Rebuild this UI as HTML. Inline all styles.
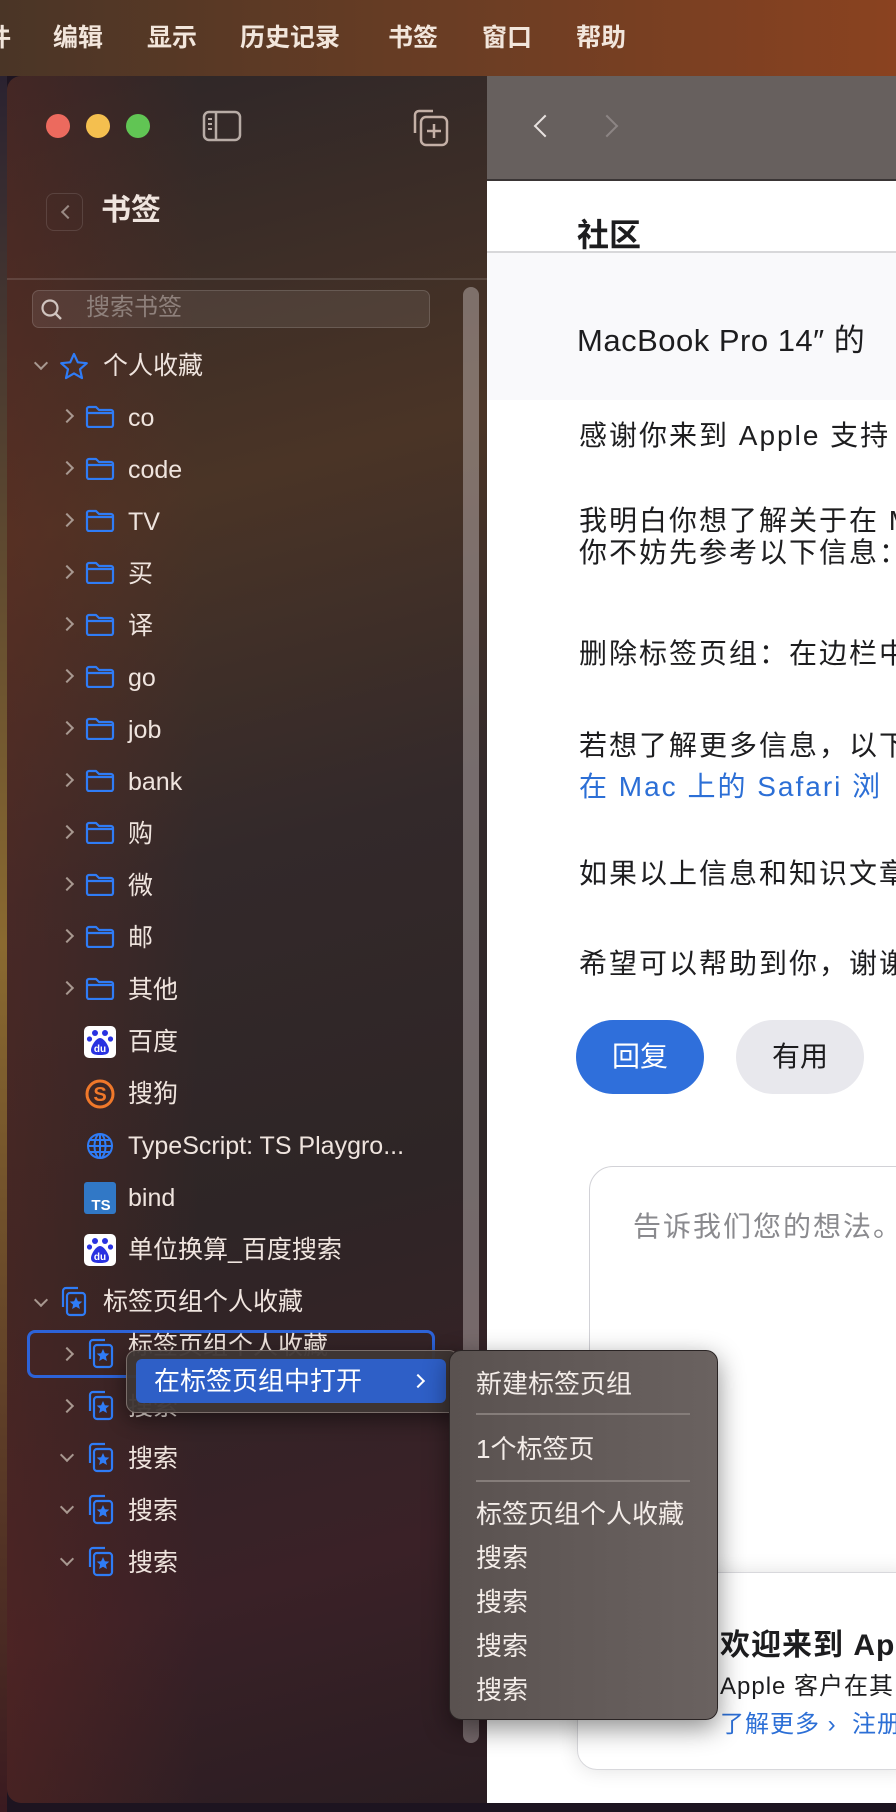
<!DOCTYPE html>
<html><head><meta charset="utf-8">
<style>
*{margin:0;padding:0;box-sizing:border-box}
body{width:896px;height:1812px;overflow:hidden;position:relative;font-family:"Liberation Sans","Noto Sans CJK SC",sans-serif;background:#1d1420}
.a{position:absolute}
.menubar{left:0;top:0;width:896px;height:76px;background:linear-gradient(90deg,#4a3526 0%,#6a3d24 50%,#8a4220 100%)}
.menubar span{position:absolute;top:18px;font-size:25px;color:#f2e6dc;font-weight:bold}
.side{left:7px;top:76px;width:480px;height:1727px;border-radius:14px 0 0 14px;background:linear-gradient(165deg,#2d2628 0%,#4a3426 25%,#33292a 45%,#2e2526 65%,#3a2127 85%,#2a1d22 100%);overflow:hidden}
.side:before{content:"";position:absolute;left:0;top:0;width:100%;height:100%;background:linear-gradient(90deg,rgba(110,40,30,.35),rgba(0,0,0,0) 40%)}
.t{position:absolute;color:#efe4de;font-size:25px;white-space:nowrap;line-height:30px}
.chev{position:absolute;width:10px;height:10px;border-right:2.5px solid #a89890;border-bottom:2.5px solid #a89890}
.cr{transform:rotate(-45deg)}
.cd{transform:rotate(45deg)}
.right{left:487px;top:76px;width:409px;height:1727px;background:#fff;overflow:hidden}
.body{position:absolute;left:92px;font-size:28px;color:#1d1d1f;letter-spacing:2px;white-space:nowrap;line-height:34px}
.mi{position:absolute;left:476px;color:#f3ece8;font-size:26px;white-space:nowrap;line-height:30px}
</style></head><body>
<div class="a menubar">
<span style="left:-14px">件</span><span style="left:53px">编辑</span><span style="left:147px">显示</span><span style="left:240px">历史记录</span><span style="left:388px">书签</span><span style="left:482px">窗口</span><span style="left:576px">帮助</span>
</div>
<div class="a" style="left:0;top:76px;width:7px;height:1736px;background:linear-gradient(#2a2230,#8a6a30 50%,#3a1a20)"></div>

<div class="a side">
 <div class="a" style="left:39px;top:38px;width:24px;height:24px;border-radius:50%;background:#ec6a5e"></div>
 <div class="a" style="left:79px;top:38px;width:24px;height:24px;border-radius:50%;background:#f4bf4f"></div>
 <div class="a" style="left:119px;top:38px;width:24px;height:24px;border-radius:50%;background:#61c554"></div>
 <svg class="a" style="left:195px;top:34px" width="40" height="32"><rect x="2" y="2" width="36" height="28" rx="5" fill="none" stroke="#b8aca6" stroke-width="2.5"/><line x1="14" y1="2" x2="14" y2="30" stroke="#b8aca6" stroke-width="2.5"/><line x1="6" y1="9" x2="10" y2="9" stroke="#b8aca6" stroke-width="2"/><line x1="6" y1="14" x2="10" y2="14" stroke="#b8aca6" stroke-width="2"/><line x1="6" y1="19" x2="10" y2="19" stroke="#b8aca6" stroke-width="2"/></svg>
 <svg class="a" style="left:404px;top:31px" width="40" height="40"><path d="M22 4H8a4 4 0 0 0-4 4v18" fill="none" stroke="#c4b0a6" stroke-width="2.5"/><rect x="10" y="10" width="26" height="28" rx="5" fill="none" stroke="#c4b0a6" stroke-width="2.5"/><path d="M23 17v14M16 24h14" stroke="#c4b0a6" stroke-width="2.5"/></svg>
 <div class="a" style="left:39px;top:117px;width:37px;height:38px;border:1.5px solid rgba(255,255,255,.12);border-radius:8px"></div>
 <div class="chev a" style="left:56px;top:131px;transform:rotate(135deg);width:10px;height:10px;border-color:#9a8a84;border-width:0 2px 2px 0"></div>
 <div class="t" style="left:94px;top:116px;font-size:30px;font-weight:bold;line-height:38px">书签</div>
 <div class="a" style="left:0;top:202px;width:480px;height:2px;background:rgba(255,255,255,.12)"></div>
 <div class="a" style="left:25px;top:214px;width:398px;height:38px;border-radius:7px;background:rgba(255,255,255,.08);border:1.5px solid rgba(255,255,255,.14)"></div>
 <svg class="a" style="left:33px;top:222px" width="24" height="24"><circle cx="10" cy="10" r="7.5" fill="none" stroke="#d0c4bf" stroke-width="2.2"/><path d="M15.5 15.5L21 21" stroke="#d0c4bf" stroke-width="2.4"/></svg>
 <div class="t" style="left:79px;top:217px;color:#8e807b;font-size:24px">搜索书签</div>
 <div class="a" style="left:456px;top:211px;width:16px;height:1456px;border-radius:8px;background:rgba(200,190,190,.45)"></div>
</div>

<div class="chev cd a" style="left:36px;top:358px"></div>
<svg class="a" style="left:59px;top:352px" width="30" height="30"><path d="M15 2l3.8 8.3 9 .9-6.8 6 2 8.9L15 21.4 7 26.1l2-8.9-6.8-6 9-.9z" fill="none" stroke="#2f7cf6" stroke-width="2.2" stroke-linejoin="round"/></svg>
<div class="t" style="left:103px;top:351px">个人收藏</div>

<svg width="0" height="0" style="position:absolute"><defs>
<symbol id="fold" viewBox="0 0 30 24"><path d="M2 5a2 2 0 0 1 2-2h7l3 3h12a2 2 0 0 1 2 2v13a2 2 0 0 1-2 2H4a2 2 0 0 1-2-2z M2 9h26" fill="none" stroke="#2f7cf6" stroke-width="2.2" stroke-linejoin="round"/></symbol>
<symbol id="tg" viewBox="0 0 30 32"><path d="M5 22V6a3 3 0 0 1 3-3h12" fill="none" stroke="#2f7cf6" stroke-width="2.2"/><rect x="9" y="8" width="18" height="22" rx="3" fill="none" stroke="#2f7cf6" stroke-width="2.2"/><path d="M18 12l1.9 4.2 4.4.4-3.4 3 1 4.4-3.9-2.3-3.9 2.3 1-4.4-3.4-3 4.4-.4z" fill="#2f7cf6"/></symbol>
<symbol id="bd" viewBox="0 0 32 32"><rect width="32" height="32" rx="5" fill="#fff"/><circle cx="11" cy="7" r="3" fill="#2932e1"/><circle cx="21" cy="7" r="3" fill="#2932e1"/><circle cx="5.5" cy="13" r="2.6" fill="#2932e1"/><circle cx="26.5" cy="13" r="2.6" fill="#2932e1"/><path d="M16 12c-4 0-9 8-9 12s3 5 9 5 9-1 9-5-5-12-9-12z" fill="#2932e1"/><text x="16" y="26" font-size="10" fill="#fff" text-anchor="middle" font-family="Liberation Sans" font-weight="bold">du</text></symbol>
</defs></svg>

<div class="chev cr a" style="left:62px;top:411px"></div><svg class="a" style="left:85px;top:404px" width="30" height="24"><use href="#fold"/></svg><div class="t" style="left:128px;top:403px">co</div>
<div class="chev cr a" style="left:62px;top:463px"></div><svg class="a" style="left:85px;top:456px" width="30" height="24"><use href="#fold"/></svg><div class="t" style="left:128px;top:455px">code</div>
<div class="chev cr a" style="left:62px;top:515px"></div><svg class="a" style="left:85px;top:508px" width="30" height="24"><use href="#fold"/></svg><div class="t" style="left:128px;top:507px">TV</div>
<div class="chev cr a" style="left:62px;top:567px"></div><svg class="a" style="left:85px;top:560px" width="30" height="24"><use href="#fold"/></svg><div class="t" style="left:128px;top:559px">买</div>
<div class="chev cr a" style="left:62px;top:619px"></div><svg class="a" style="left:85px;top:612px" width="30" height="24"><use href="#fold"/></svg><div class="t" style="left:128px;top:611px">译</div>
<div class="chev cr a" style="left:62px;top:671px"></div><svg class="a" style="left:85px;top:664px" width="30" height="24"><use href="#fold"/></svg><div class="t" style="left:128px;top:663px">go</div>
<div class="chev cr a" style="left:62px;top:723px"></div><svg class="a" style="left:85px;top:716px" width="30" height="24"><use href="#fold"/></svg><div class="t" style="left:128px;top:715px">job</div>
<div class="chev cr a" style="left:62px;top:775px"></div><svg class="a" style="left:85px;top:768px" width="30" height="24"><use href="#fold"/></svg><div class="t" style="left:128px;top:767px">bank</div>
<div class="chev cr a" style="left:62px;top:827px"></div><svg class="a" style="left:85px;top:820px" width="30" height="24"><use href="#fold"/></svg><div class="t" style="left:128px;top:819px">购</div>
<div class="chev cr a" style="left:62px;top:879px"></div><svg class="a" style="left:85px;top:872px" width="30" height="24"><use href="#fold"/></svg><div class="t" style="left:128px;top:871px">微</div>
<div class="chev cr a" style="left:62px;top:931px"></div><svg class="a" style="left:85px;top:924px" width="30" height="24"><use href="#fold"/></svg><div class="t" style="left:128px;top:923px">邮</div>
<div class="chev cr a" style="left:62px;top:983px"></div><svg class="a" style="left:85px;top:976px" width="30" height="24"><use href="#fold"/></svg><div class="t" style="left:128px;top:975px">其他</div>

<svg class="a" style="left:84px;top:1026px" width="32" height="32"><use href="#bd"/></svg><div class="t" style="left:128px;top:1027px">百度</div>
<svg class="a" style="left:84px;top:1078px" width="32" height="32"><circle cx="16" cy="16" r="13" fill="none" stroke="#f0782a" stroke-width="3"/><text x="16" y="23" font-size="20" font-weight="bold" fill="#f0782a" text-anchor="middle" font-family="Liberation Sans">S</text></svg><div class="t" style="left:128px;top:1079px">搜狗</div>
<svg class="a" style="left:86px;top:1132px" width="28" height="28" fill="none" stroke="#2f7cf6" stroke-width="2"><circle cx="14" cy="14" r="12"/><ellipse cx="14" cy="14" rx="5.5" ry="12"/><path d="M2 14h24M4 8h20M4 20h20M14 2v24"/></svg><div class="t" style="left:128px;top:1131px">TypeScript: TS Playgro...</div>
<svg class="a" style="left:84px;top:1182px" width="32" height="32"><rect width="32" height="32" rx="3" fill="#3178c6"/><text x="17" y="28" font-size="15" font-weight="bold" fill="#fff" text-anchor="middle" font-family="Liberation Sans">TS</text></svg><div class="t" style="left:128px;top:1183px">bind</div>
<svg class="a" style="left:84px;top:1234px" width="32" height="32"><use href="#bd"/></svg><div class="t" style="left:128px;top:1235px">单位换算_百度搜索</div>

<div class="chev cd a" style="left:36px;top:1295px"></div>
<svg class="a" style="left:58px;top:1285px" width="30" height="32"><use href="#tg"/></svg><div class="t" style="left:103px;top:1287px">标签页组个人收藏</div>

<div class="a" style="left:27px;top:1330px;width:408px;height:48px;border:3px solid #2d63d8;border-radius:8px"></div>
<div class="chev cr a" style="left:62px;top:1349px"></div><svg class="a" style="left:85px;top:1337px" width="30" height="32"><use href="#tg"/></svg><div class="t" style="left:128px;top:1331px">标签页组个人收藏</div>
<div class="chev cr a" style="left:62px;top:1401px"></div><svg class="a" style="left:85px;top:1389px" width="30" height="32"><use href="#tg"/></svg><div class="t" style="left:128px;top:1392px">搜索</div>
<div class="chev cd a" style="left:62px;top:1450px"></div><svg class="a" style="left:85px;top:1441px" width="30" height="32"><use href="#tg"/></svg><div class="t" style="left:128px;top:1444px">搜索</div>
<div class="chev cd a" style="left:62px;top:1502px"></div><svg class="a" style="left:85px;top:1493px" width="30" height="32"><use href="#tg"/></svg><div class="t" style="left:128px;top:1496px">搜索</div>
<div class="chev cd a" style="left:62px;top:1554px"></div><svg class="a" style="left:85px;top:1545px" width="30" height="32"><use href="#tg"/></svg><div class="t" style="left:128px;top:1548px">搜索</div>

<div class="a right">
 <div class="a" style="left:0;top:0;width:409px;height:104px;background:#67605e"></div>
 <div class="a" style="left:0;top:103px;width:409px;height:2px;background:#3a3535"></div>
 <div class="chev a" style="left:50px;top:42px;width:16px;height:16px;border-color:#e8e2e0;border-width:0 2.5px 2.5px 0;transform:rotate(135deg)"></div>
 <div class="chev a" style="left:112px;top:42px;width:16px;height:16px;border-color:#8c8584;border-width:0 2.5px 2.5px 0;transform:rotate(-45deg)"></div>
 <div class="a" style="left:90px;top:134px;font-size:32px;font-weight:bold;color:#1d1d1f">社区</div>
 <div class="a" style="left:0;top:175px;width:409px;height:2px;background:#d8d8da"></div>
 <div class="a" style="left:0;top:177px;width:409px;height:147px;background:#f9f9fb"></div>
 <div class="body" style="left:90px;top:248px;font-size:31px;letter-spacing:0.5px">MacBook Pro 14″ 的</div>
 <div class="body" style="top:343px">感谢你来到 Apple 支持</div>
 <div class="body" style="top:428px">我明白你想了解关于在 M</div>
 <div class="body" style="top:460px">你不妨先参考以下信息：</div>
 <div class="body" style="top:561px">删除标签页组：在边栏中</div>
 <div class="body" style="top:653px">若想了解更多信息，以下</div>
 <div class="body" style="top:694px;color:#2c6fd6">在 Mac 上的 Safari 浏</div>
 <div class="body" style="top:781px">如果以上信息和知识文章</div>
 <div class="body" style="top:871px">希望可以帮助到你，谢谢</div>
 <div class="a" style="left:89px;top:944px;width:128px;height:74px;border-radius:37px;background:#2f6fdb;color:#fff;font-size:28px;text-align:center;line-height:74px">回复</div>
 <div class="a" style="left:249px;top:944px;width:128px;height:74px;border-radius:37px;background:#e8e8ed;color:#1d1d1f;font-size:28px;text-align:center;line-height:74px">有用</div>
 <div class="a" style="left:102px;top:1090px;width:340px;height:420px;border:1.5px solid #d2d2d7;border-radius:24px"></div>
 <div class="body" style="left:146px;top:1134px;color:#8a8a8e">告诉我们您的想法。</div>
 <div class="a" style="left:89px;top:1605px;width:128px;height:40px;border-radius:20px;background:#2f6fdb"></div>
 <div class="a" style="left:249px;top:1605px;width:128px;height:40px;border-radius:20px;background:#6e6e73"></div>
 <div class="a" style="left:90px;top:1496px;width:340px;height:198px;border:1.5px solid #d8d8dc;border-radius:20px;background:#fff;box-shadow:0 0 20px rgba(0,0,0,.12)"></div>
 <div class="a" style="left:233px;top:1544px;font-size:30px;font-weight:bold;color:#1d1d1f;white-space:nowrap;letter-spacing:1px">欢迎来到 Apple</div>
 <div class="a" style="left:233px;top:1590px;font-size:24px;color:#1d1d1f;white-space:nowrap;letter-spacing:1px">Apple 客户在其</div>
 <div class="a" style="left:233px;top:1628px;font-size:24px;color:#2c6fd6;white-space:nowrap;letter-spacing:1px">了解更多 ›&nbsp;&nbsp;注册</div>
</div>

<div class="a" style="left:126px;top:1350px;width:333px;height:63px;border-radius:10px;background:rgba(62,54,52,.96);border:1.5px solid #7a6e6a;box-shadow:0 6px 20px rgba(0,0,0,.45)"></div>
<div class="a" style="left:136px;top:1359px;width:310px;height:44px;border-radius:6px;background:#2e5fc7"></div>
<div class="a" style="left:154px;top:1366px;color:#fff;font-size:26px;line-height:30px;white-space:nowrap">在标签页组中打开</div>
<div class="chev cr a" style="left:413px;top:1376px;border-color:#fff"></div>

<div class="a" style="left:449px;top:1350px;width:269px;height:370px;border-radius:12px;background:linear-gradient(90deg,#5a5250,#6a6260);border:1.5px solid #2a2424;box-shadow:0 8px 26px rgba(0,0,0,.45)"></div>
<div class="mi" style="top:1369px">新建标签页组</div>
<div class="a" style="left:476px;top:1413px;width:214px;height:2px;background:#857d7a"></div>
<div class="mi" style="top:1434px">1个标签页</div>
<div class="a" style="left:476px;top:1480px;width:214px;height:2px;background:#857d7a"></div>
<div class="mi" style="top:1499px">标签页组个人收藏</div>
<div class="mi" style="top:1543px">搜索</div>
<div class="mi" style="top:1587px">搜索</div>
<div class="mi" style="top:1631px">搜索</div>
<div class="mi" style="top:1675px">搜索</div>
</body></html>
